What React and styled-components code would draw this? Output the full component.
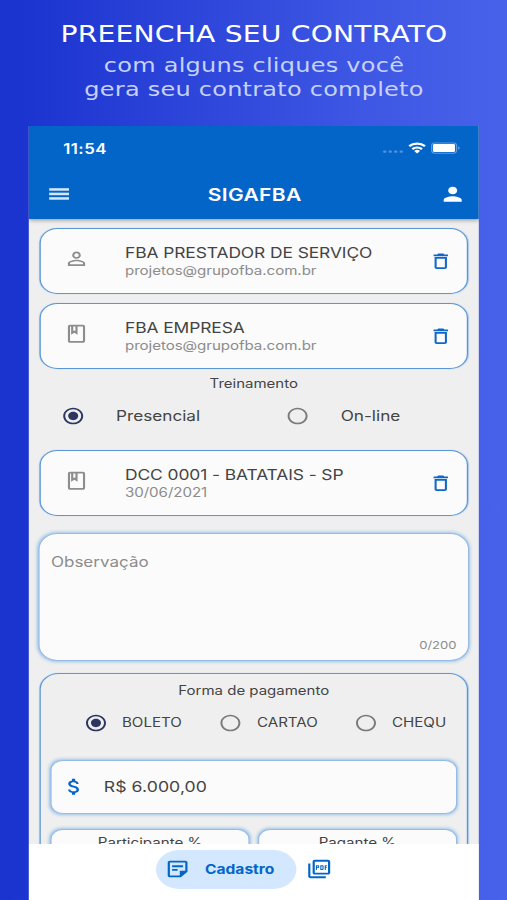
import React from 'react';
import styled, { createGlobalStyle, ThemeProvider } from 'styled-components';
import {
    MdPerson,
    MdPersonOutline,
    MdOutlineClass,
    MdDeleteOutline,
    MdRadioButtonChecked,
    MdRadioButtonUnchecked,
    MdAttachMoney,
    MdOutlineStickyNote2,
    MdOutlinePictureAsPdf,
} from 'react-icons/md';

const theme = {
    stretch: 1.2,
    color: {
        main: '#0465c9',
        border: '#5b97d8',
        soft: '#97bce3',
        page: '#efefef',
        card: '#fbfbfb',
        text: '#444444',
        muted: '#8c8c8c',
        radio: '#2d3561',
        pill: '#d3e8fe',
    },
}

const GlobalStyle = createGlobalStyle`
    * {
        box-sizing: border-box;
    }
    body {
        margin: 0;
        overflow: hidden;
        background: #1c34d0;
    }
    svg {
        display: block;
        flex-shrink: 0;
    }
`

const Page = styled.div`
    width: 422.5px;
    height: 900px;
    padding: 0 23.33px 0 24.17px;
    display: flex;
    flex-direction: column;
    overflow: hidden;
    background: linear-gradient(90deg, #1b33cf 0%, #1d35d0 6%, #4059e5 76%, #4862ea 100%);
    transform: scaleX(${(props) => props.theme.stretch});
    transform-origin: 0 0;
    font-family: Inter, "Liberation Sans", sans-serif;
`

const Headline = styled.header`
    height: 126px;
    padding-top: 19px;
    flex-shrink: 0;
    text-align: center;
    white-space: nowrap;
    font-family: "DejaVu Sans", sans-serif;
    color: #c6d2fb;
    font-size: 20px;
    line-height: 24px;
    letter-spacing: 0.2px;
    h1 {
        margin: 0 0 4px;
        color: #fff;
        font-size: 23.5px;
        line-height: 30px;
        font-weight: 400;
        letter-spacing: 0.16px;
    }
`

const Phone = styled.main`
    flex: 1;
    display: flex;
    flex-direction: column;
    overflow: hidden;
    background: ${(props) => props.theme.color.page};
`

const TopBar = styled.div`
    height: 93px;
    flex-shrink: 0;
    color: #fff;
    background: ${(props) => props.theme.color.main};
    box-shadow: 0 1px 4px rgba(0, 0, 0, 0.4);
    z-index: 1;
`

const StatusBar = styled.div`
    height: 44px;
    padding: 0 15px 0 28.5px;
    display: flex;
    align-items: center;
    justify-content: space-between;
    font-size: 14px;
    font-weight: 600;
    letter-spacing: 0.4px;
`

const TitleBar = styled.div`
    height: 48px;
    padding: 0 10.6px 0 14px;
    display: flex;
    align-items: center;
    font-size: 17.5px;
    font-weight: 600;
    letter-spacing: 0.3px;
    span {
        flex: 1;
        padding-right: 1.8px;
        text-align: center;
    }
`

const Content = styled.div`
    flex: 1;
    min-height: 0;
    padding: 9px 9.2px 0 8.8px;
    overflow: hidden;
`

const Text = styled.div`
    color: ${(props) => props.theme.color[props.$color || 'text']};
    font-size: ${(props) => props.$size}px;
    font-weight: ${(props) => props.$weight || 400};
    letter-spacing: ${(props) => props.$spacing || 0}px;
    line-height: 18px;
    text-align: ${(props) => props.$align || 'left'};
    white-space: nowrap;
`

const SectionTitle = styled(Text)`
    margin: -3px 0 0;
`

const Card = styled.section`
    height: 66px;
    margin-bottom: 9px;
    padding: 1px 11.4px 0 19.3px;
    display: flex;
    align-items: center;
    border: 1px solid ${(props) => props.theme.color.border};
    border-radius: 15px;
    background: ${(props) => props.theme.color.card};
    box-shadow: 0 0 1px #a9c8ea;
    .lead {
        margin: 0 29.4px 6px 0;
        color: #8d8d8d;
    }
    .body {
        flex: 1;
    }
    .delete {
        margin-bottom: 1px;
        color: #0f68c9;
    }
`

const TrainingOptions = styled.div`
    height: 32px;
    margin: 7px 0 18px;
    padding-left: 17.6px;
    display: grid;
    grid-template-columns: 187.2px 1fr;
`

const PaymentOptions = styled.div`
    height: 32px;
    margin: 7px 0 21px;
    padding-left: 28px;
    display: grid;
    grid-template-columns: 112.5px 112.5px 1fr;
`

const Option = styled.label`
    display: flex;
    align-items: center;
    gap: ${(props) => props.$gap}px;
    color: ${(props) => (props.$checked ? props.theme.color.radio : '#7b7b7b')};
`

const Note = styled.section`
    height: 128px;
    margin: 17px -1px 12px;
    padding: 19px 9.5px 6px 9.5px;
    display: flex;
    flex-direction: column;
    justify-content: space-between;
    border: 1px solid ${(props) => props.theme.color.soft};
    border-radius: 16px;
    background: ${(props) => props.theme.color.card};
    box-shadow: 0 0 3px 0.6px #9cc3ec;
`

const Payment = styled.section`
    height: 240px;
    padding: 8px 8px 0;
    border: 1px solid ${(props) => props.theme.color.border};
    border-radius: 16px 16px 0 0;
    box-shadow: 0 0 1px #a9c8ea;
`

const Field = styled.div`
    height: 54px;
    padding: ${(props) => (props.$centered ? '4px 0 0' : '0 7.6px')};
    display: flex;
    align-items: ${(props) => (props.$centered ? 'flex-start' : 'center')};
    justify-content: ${(props) => (props.$centered ? 'center' : 'flex-start')};
    gap: 14.4px;
    color: ${(props) => props.theme.color.main};
    border: 1px solid ${(props) => props.theme.color.soft};
    border-radius: 10px;
    background: ${(props) => props.theme.color.card};
    box-shadow: 0 0 3px 0.6px #9cc3ec;
`

const Shares = styled.div`
    margin-top: 15px;
    display: grid;
    grid-template-columns: 1fr 1fr;
    gap: 6.5px;
`

const BottomNav = styled.nav`
    height: 56px;
    padding: 6px 0 0 106px;
    flex-shrink: 0;
    display: flex;
    align-items: flex-start;
    gap: 7.8px;
    color: ${(props) => props.theme.color.main};
    background: #fff;
    .pdf {
        margin-top: 8px;
    }
`

const Pill = styled.div`
    width: 117px;
    height: 39px;
    padding: 0 0 1px 7px;
    display: flex;
    align-items: center;
    gap: 11.6px;
    border-radius: 20px;
    background: ${(props) => props.theme.color.pill};
`

const StatusIcons = () => (
    <svg width="66" height="14" viewBox="0 0 66 14">
        {[1.2, 5.8, 10.4, 15].map((x) => (
            <rect key={x} x={x} y="9.6" width="2.8" height="2.2" rx="0.8" fill="#4f93dc" />
        ))}
        <g fill="none" stroke="#fff" strokeWidth="2.1">
            <path d="M23 5.1a10 10 0 0 1 13.2 0" />
            <path d="M25.6 8.1a6.2 6.2 0 0 1 8 0" />
        </g>
        <path d="M27.2 9.9a3.6 3.6 0 0 1 4.8 0L29.6 12.6z" fill="#fff" />
        <rect x="41.7" y="1.9" width="20.8" height="10.3" rx="2.6" fill="none" stroke="#5c9ce0" />
        <rect x="42.8" y="3" width="18.4" height="8.1" rx="1.4" fill="#fff" />
        <path d="M63.8 5.4c1.6.5 1.6 2.7 0 3.2z" fill="#76ace5" />
    </svg>
)

const MenuIcon = () => (
    <svg width="22" height="22" viewBox="0 0 22 22" fill="#d5e8fb">
        <rect x="3" y="5.2" width="16.5" height="2.5" />
        <rect x="3" y="9.7" width="16.5" height="2.5" />
        <rect x="3" y="14.2" width="16.5" height="2.5" />
    </svg>
)

const Item = ({ icon: Icon, title, detail }) => (
    <Card>
        <Icon className="lead" size={21.5} />
        <div className="body">
            <Text $size={14.5} $spacing={-0.07}>{title}</Text>
            <Text $size={12.6} $spacing={-0.05} $color="muted">{detail}</Text>
        </div>
        <MdDeleteOutline className="delete" size={20.6} />
    </Card>
)

const Radio = ({ checked, label, gap, size }) => {
    const Icon = checked ? MdRadioButtonChecked : MdRadioButtonUnchecked;
    return (
        <Option $gap={gap} $checked={checked}>
            <Icon size={20} />
            <Text $size={size}>{label}</Text>
        </Option>
    )
}

export default function App() {
    return (
        <ThemeProvider theme={theme}>
            <GlobalStyle />
            <Page>
                <Headline>
                    <h1>PREENCHA SEU CONTRATO</h1>
                    <div>com alguns cliques você</div>
                    <div>gera seu contrato completo</div>
                </Headline>
                <Phone>
                    <TopBar>
                        <StatusBar>
                            <span>11:54</span>
                            <StatusIcons />
                        </StatusBar>
                        <TitleBar>
                            <MenuIcon />
                            <span>SIGAFBA</span>
                            <MdPerson size={22.5} />
                        </TitleBar>
                    </TopBar>
                    <Content>
                        <Item icon={MdPersonOutline} title="FBA PRESTADOR DE SERVIÇO" detail="projetos@grupofba.com.br" />
                        <Item icon={MdOutlineClass} title="FBA EMPRESA" detail="projetos@grupofba.com.br" />
                        <SectionTitle $size={12.5} $align="center">Treinamento</SectionTitle>
                        <TrainingOptions>
                            <Radio checked label="Presencial" gap={26.2} size={14.3} />
                            <Radio label="On-line" gap={26.2} size={14.3} />
                        </TrainingOptions>
                        <Item icon={MdOutlineClass} title="DCC 0001 - BATATAIS - SP" detail="30/06/2021" />
                        <Note>
                            <Text $size={14.2} $color="muted">Observação</Text>
                            <Text $size={10.9} $color="muted" $align="right">0/200</Text>
                        </Note>
                        <Payment>
                            <Text $size={12.5} $align="center">Forma de pagamento</Text>
                            <PaymentOptions>
                                <Radio checked label="BOLETO" gap={11.7} size={12.6} />
                                <Radio label="CARTAO" gap={11.7} size={12.6} />
                                <Radio label="CHEQU" gap={11.7} size={12.6} />
                            </PaymentOptions>
                            <Field>
                                <MdAttachMoney size={21.5} />
                                <Text $size={14.7} $spacing={0.07}>R$ 6.000,00</Text>
                            </Field>
                            <Shares>
                                <Field $centered>
                                    <Text $size={12.6}>Participante %</Text>
                                </Field>
                                <Field $centered>
                                    <Text $size={12.6}>Pagante %</Text>
                                </Field>
                            </Shares>
                        </Payment>
                    </Content>
                    <BottomNav>
                        <Pill>
                            <MdOutlineStickyNote2 size={22} />
                            <Text $size={13} $weight={700} $color="main">Cadastro</Text>
                        </Pill>
                        <MdOutlinePictureAsPdf className="pdf" size={22} />
                    </BottomNav>
                </Phone>
            </Page>
        </ThemeProvider>
    )
}
